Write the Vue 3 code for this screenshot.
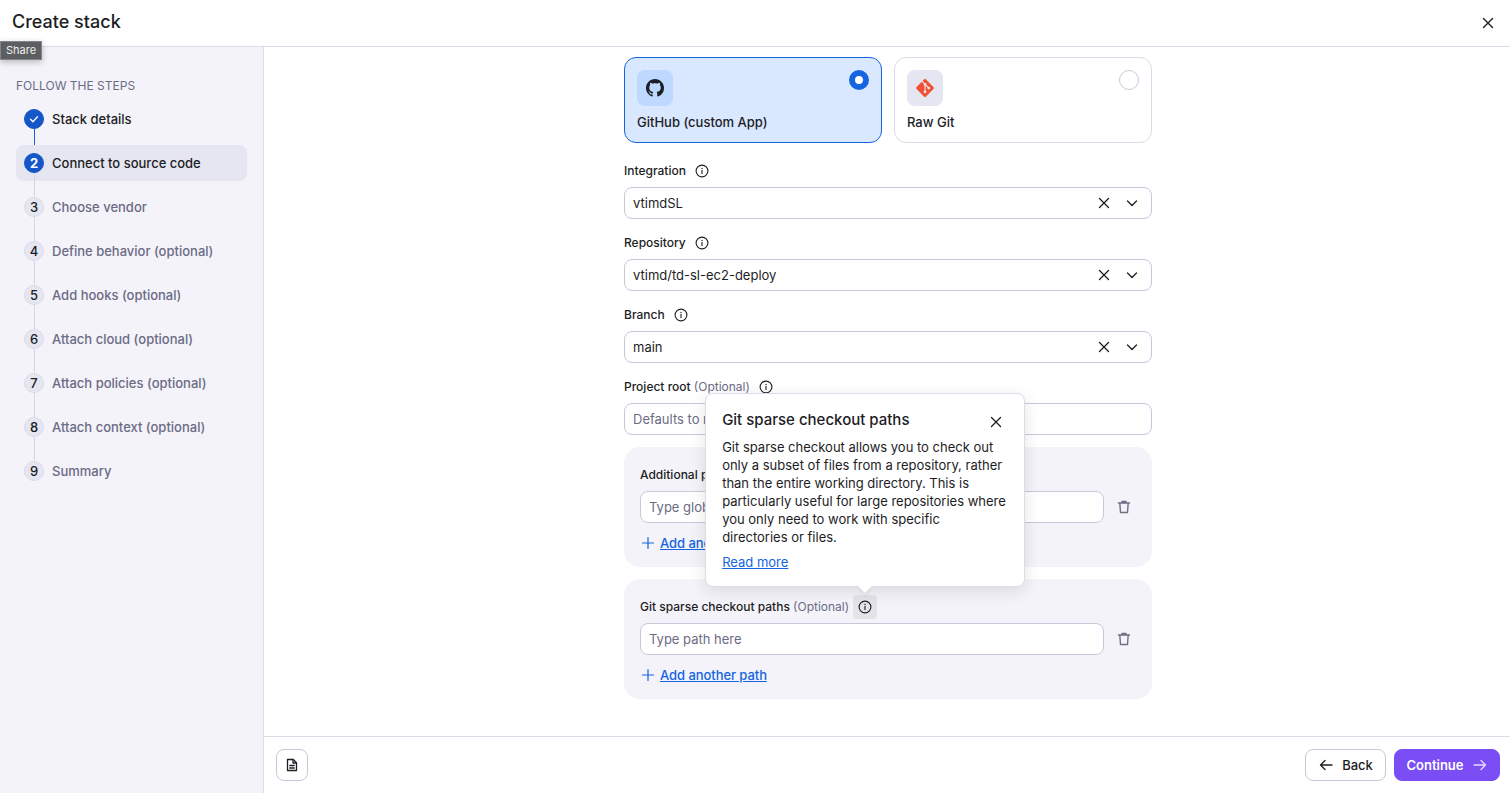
<script setup>
const steps = [
	{ n: 1, label: 'Stack details', state: 'done' },
	{ n: 2, label: 'Connect to source code', state: 'active' },
	{ n: 3, label: 'Choose vendor', state: 'todo' },
	{ n: 4, label: 'Define behavior (optional)', state: 'todo' },
	{ n: 5, label: 'Add hooks (optional)', state: 'todo' },
	{ n: 6, label: 'Attach cloud (optional)', state: 'todo' },
	{ n: 7, label: 'Attach policies (optional)', state: 'todo' },
	{ n: 8, label: 'Attach context (optional)', state: 'todo' },
	{ n: 9, label: 'Summary', state: 'todo' }
]

const selects = [
	{ label: 'Integration', value: 'vtimdSL' },
	{ label: 'Repository', value: 'vtimd/td-sl-ec2-deploy' },
	{ label: 'Branch', value: 'main' }
]
</script>

<template>
	<div class="page">
		<header class="topbar">
			<h1 class="title">Create stack</h1>
			<svg class="close" width="16" height="16" viewBox="0 0 16 16" fill="none" stroke="#1d1d25" stroke-width="1.4" stroke-linecap="round">
				<path d="M3.5 3.5l9 9M12.5 3.5l-9 9" />
			</svg>
		</header>
		<div class="share-tip">Share</div>

		<div class="body">
			<aside class="sidebar">
				<div class="steps-title">FOLLOW THE STEPS</div>
				<ul class="steps">
					<li
						v-for="step in steps"
						:key="step.n"
						class="step"
						:class="step.state"
					>
						<span class="dot">
							<svg v-if="step.state === 'done'" width="12" height="12" viewBox="0 0 12 12" fill="none" stroke="#fff" stroke-width="1.3" stroke-linecap="round" stroke-linejoin="round">
								<path d="M2.5 6.3l2.4 2.4 4.6-5" />
							</svg>
							<template v-else>{{ step.n }}</template>
						</span>
						<span class="step-label">{{ step.label }}</span>
					</li>
				</ul>
			</aside>

			<div class="main">
				<div class="content">
					<div class="form">
						<div class="cards">
							<div class="card selected">
								<span class="card-icon">
									<svg width="18" height="18" viewBox="0 0 16 16" fill="#1d1d25">
										<path d="M8 0C3.58 0 0 3.58 0 8c0 3.54 2.29 6.53 5.47 7.59.4.07.55-.17.55-.38 0-.19-.01-.82-.01-1.49-2.01.37-2.53-.49-2.69-.94-.09-.23-.48-.94-.82-1.13-.28-.15-.68-.52-.01-.53.63-.01 1.08.58 1.23.82.72 1.21 1.87.87 2.33.66.07-.52.28-.87.51-1.07-1.78-.2-3.64-.89-3.64-3.95 0-.87.31-1.59.82-2.15-.08-.2-.36-1.02.08-2.12 0 0 .67-.21 2.2.82.64-.18 1.32-.27 2-.27.68 0 1.36.09 2 .27 1.53-1.04 2.2-.82 2.2-.82.44 1.1.16 1.92.08 2.12.51.56.82 1.27.82 2.15 0 3.07-1.87 3.75-3.65 3.95.29.25.54.73.54 1.48 0 1.07-.01 1.93-.01 2.2 0 .21.15.46.55.38A8.013 8.013 0 0016 8c0-4.42-3.58-8-8-8z" />
									</svg>
								</span>
								<span class="card-label">GitHub (custom App)</span>
								<span class="radio on"></span>
							</div>
							<div class="card">
								<span class="card-icon">
									<svg width="18" height="18" viewBox="0 0 24 24" fill="#f05133">
										<path d="M23.546 10.93L13.067.452c-.604-.603-1.582-.603-2.188 0L8.708 2.627l2.76 2.76c.645-.215 1.379-.07 1.889.441.516.515.658 1.258.438 1.9l2.658 2.66c.645-.223 1.387-.078 1.9.435.721.72.721 1.884 0 2.604-.719.719-1.881.719-2.6 0-.539-.541-.674-1.337-.404-1.996L12.86 8.955v6.525c.176.086.342.203.488.348.713.721.713 1.883 0 2.6-.719.721-1.889.721-2.609 0-.719-.719-.719-1.879 0-2.598.182-.18.387-.316.605-.406V8.835c-.217-.091-.424-.222-.6-.401-.545-.545-.676-1.342-.396-2.009L7.636 3.7.45 10.881c-.6.605-.6 1.584 0 2.189l10.48 10.477c.604.604 1.582.604 2.186 0l10.43-10.43c.605-.603.605-1.582 0-2.187" />
									</svg>
								</span>
								<span class="card-label">Raw Git</span>
								<span class="radio"></span>
							</div>
						</div>

						<div v-for="item in selects" :key="item.label" class="field">
							<div class="label">
								<span>{{ item.label }}</span>
								<svg class="info" width="14" height="14" viewBox="0 0 14 14" fill="none" stroke="#1d1d25" stroke-width="1.1">
									<circle cx="7" cy="7" r="5.9" />
									<path d="M7 6.4v3.2" stroke-linecap="round" />
									<circle cx="7" cy="4.4" r=".7" fill="#1d1d25" stroke="none" />
								</svg>
							</div>
							<div class="select">
								<span class="select-value">{{ item.value }}</span>
								<svg width="16" height="16" viewBox="0 0 16 16" fill="none" stroke="#1d1d25" stroke-width="1.3" stroke-linecap="round">
									<path d="M3.5 3.5l9 9M12.5 3.5l-9 9" />
								</svg>
								<svg width="16" height="16" viewBox="0 0 16 16" fill="none" stroke="#1d1d25" stroke-width="1.3" stroke-linecap="round" stroke-linejoin="round">
									<path d="M3.5 6l4.5 4.5L12.5 6" />
								</svg>
							</div>
						</div>

						<div class="field root">
							<div class="label">
								<span>Project root <span class="optional">(Optional)</span></span>
								<svg class="info" width="14" height="14" viewBox="0 0 14 14" fill="none" stroke="#1d1d25" stroke-width="1.1">
									<circle cx="7" cy="7" r="5.9" />
									<path d="M7 6.4v3.2" stroke-linecap="round" />
									<circle cx="7" cy="4.4" r=".7" fill="#1d1d25" stroke="none" />
								</svg>
							</div>
							<div class="input">Defaults to repository root</div>
						</div>

						<div class="panel">
							<div class="label panel-label">
								<span>Additional project globs <span class="optional">(Optional)</span></span>
							</div>
							<div class="input-row">
								<div class="input grow">Type glob here</div>
								<svg class="trash" width="16" height="16" viewBox="0 0 16 16" fill="none" stroke="#6f6f85" stroke-width="1.4" stroke-linecap="round" stroke-linejoin="round">
									<path d="M2.5 4h11M6 4V2.5h4V4M3.8 4l.7 9.5h7l.7-9.5" />
								</svg>
							</div>
							<div class="add-row">
								<svg width="14" height="14" viewBox="0 0 14 14" fill="none" stroke="#1565e0" stroke-width="1.2" stroke-linecap="round">
									<path d="M7 1.5v11M1.5 7h11" />
								</svg>
								<a class="link">Add another glob</a>
							</div>
						</div>

						<div class="panel">
							<div class="label panel-label">
								<span>Git sparse checkout paths <span class="optional">(Optional)</span></span>
								<span class="info-btn">
									<svg width="14" height="14" viewBox="0 0 14 14" fill="none" stroke="#1d1d25" stroke-width="1.1">
										<circle cx="7" cy="7" r="5.9" />
										<path d="M7 6.4v3.2" stroke-linecap="round" />
										<circle cx="7" cy="4.4" r=".7" fill="#1d1d25" stroke="none" />
									</svg>
									<div class="popover">
										<div class="pop-head">
											<span class="pop-title">Git sparse checkout paths</span>
											<svg class="pop-close" width="16" height="16" viewBox="0 0 16 16" fill="none" stroke="#1d1d25" stroke-width="1.3" stroke-linecap="round">
												<path d="M3.5 3.5l9 9M12.5 3.5l-9 9" />
											</svg>
										</div>
										<p class="pop-text">Git sparse checkout allows you to check out only a subset of files from a repository, rather than the entire working directory. This is particularly useful for large repositories where you only need to work with specific directories or files.</p>
										<a class="link pop-link">Read more</a>
										<span class="pop-arrow"></span>
									</div>
								</span>
							</div>
							<div class="input-row">
								<div class="input grow">Type path here</div>
								<svg class="trash" width="16" height="16" viewBox="0 0 16 16" fill="none" stroke="#6f6f85" stroke-width="1.4" stroke-linecap="round" stroke-linejoin="round">
									<path d="M2.5 4h11M6 4V2.5h4V4M3.8 4l.7 9.5h7l.7-9.5" />
								</svg>
							</div>
							<div class="add-row">
								<svg width="14" height="14" viewBox="0 0 14 14" fill="none" stroke="#1565e0" stroke-width="1.2" stroke-linecap="round">
									<path d="M7 1.5v11M1.5 7h11" />
								</svg>
								<a class="link">Add another path</a>
							</div>
						</div>
					</div>
				</div>

				<footer class="footer">
					<button class="btn icon-btn">
						<svg width="16" height="16" viewBox="0 0 16 16" fill="none" stroke="#1d1d25" stroke-width="1.3" stroke-linejoin="round" stroke-linecap="round">
							<path d="M3.5 2.5h5.8l3.2 3.2v7.8h-9z" />
							<path d="M9 2.5V6h3.5M5.8 8.5h4.4M5.8 11h4.4" />
						</svg>
					</button>
					<div class="footer-right">
						<button class="btn back">
							<svg width="16" height="16" viewBox="0 0 16 16" fill="none" stroke="#1d1d25" stroke-width="1.3" stroke-linecap="round" stroke-linejoin="round">
								<path d="M14 8H2.5M7 3.5L2.5 8 7 12.5" />
							</svg>
							Back
						</button>
						<button class="btn continue">
							Continue
							<svg width="16" height="16" viewBox="0 0 16 16" fill="none" stroke="#e6dbff" stroke-width="1.3" stroke-linecap="round" stroke-linejoin="round">
								<path d="M2 8h11.5M9 3.5L13.5 8 9 12.5" />
							</svg>
						</button>
					</div>
				</footer>
			</div>
		</div>
	</div>
</template>

<style>
html, body {
	margin: 0;
	background: #fff;
}
</style>

<style scoped>
.page {
	position: relative;
	display: flex;
	flex-direction: column;
	width: 1510px;
	height: 793px;
	overflow: hidden;
	font-family: Inter, "Noto Sans", sans-serif;
	font-size: 13px;
	color: #1d1d25;
}

.topbar {
	display: flex;
	align-items: center;
	justify-content: space-between;
	height: 47px;
	box-sizing: border-box;
	padding: 0 14px 0 12px;
	border-bottom: 1px solid #dcdce8;
	flex-shrink: 0;
}

.title {
	margin: 0 0 2px;
	font-size: 18px;
	font-weight: 500;
	line-height: 24px;
}

.share-tip {
	position: absolute;
	left: 0;
	top: 41px;
	width: 42px;
	height: 19px;
	box-sizing: border-box;
	border: 1px solid #858585;
	background: #5b5f61;
	color: #f0f0f0;
	font-size: 11px;
	line-height: 17px;
	text-align: center;
	box-shadow: 0 2px 6px rgba(0, 0, 0, 0.25);
}

.body {
	display: flex;
	flex: 1;
	min-height: 0;
}

.sidebar {
	width: 264px;
	flex-shrink: 0;
	box-sizing: border-box;
	padding: 31px 16px 0;
	background: #f3f3f9;
	border-right: 1px solid #dcdce8;
}

.steps-title {
	font-size: 12px;
	line-height: 16px;
	color: #6b6b85;
	margin-bottom: 7px;
}

.steps {
	list-style: none;
	margin: 0;
	padding: 0;
	display: flex;
	flex-direction: column;
	gap: 8px;
}

.step {
	position: relative;
	display: flex;
	align-items: center;
	gap: 8px;
	width: 231px;
	height: 36px;
	padding-left: 8px;
	box-sizing: border-box;
	border-radius: 8px;
	color: #6b6b85;
	font-weight: 500;
}

.step.active {
	background: #e5e6f1;
}

.step.done,
.step.active {
	color: #1d1d25;
}

.step::after {
	content: '';
	position: absolute;
	left: 17.5px;
	top: 28px;
	width: 1px;
	height: 24px;
	background: #d5d5e6;
}

.step.done::after {
	background: #1565e0;
}

.step:last-child::after {
	display: none;
}

.dot {
	position: relative;
	z-index: 1;
	display: flex;
	align-items: center;
	justify-content: center;
	width: 20px;
	height: 20px;
	box-sizing: border-box;
	border-radius: 50%;
	background: #e5e6f1;
	border: 1px solid #dcdce8;
	color: #1d1d25;
	font-size: 13px;
	font-weight: 500;
}

.step.done .dot,
.step.active .dot {
	background: #1557c9;
	border-color: #1557c9;
	color: #fff;
	font-weight: 700;
}

.main {
	flex: 1;
	min-width: 0;
	display: flex;
	flex-direction: column;
}

.content {
	flex: 1;
	min-height: 0;
	display: flex;
	justify-content: center;
	padding-top: 10px;
}

.form {
	width: 528px;
	margin-left: 2px;
}

.cards {
	display: grid;
	grid-template-columns: 258px 258px;
	gap: 12px;
	margin-bottom: 20px;
}

.card {
	position: relative;
	display: flex;
	flex-direction: column;
	align-items: flex-start;
	height: 86px;
	box-sizing: border-box;
	padding: 12px 12px 0;
	border: 1px solid #dcdce8;
	border-radius: 12px;
}

.card.selected {
	background: #d9e8ff;
	border-color: #1565e0;
}

.card-icon {
	display: flex;
	align-items: center;
	justify-content: center;
	width: 36px;
	height: 36px;
	flex-shrink: 0;
	border-radius: 8px;
	background: #e5e6f1;
}

.selected .card-icon {
	background: #bdd9ff;
}

.card-label {
	margin-top: 6px;
	line-height: 20px;
	font-weight: 500;
}

.radio {
	position: absolute;
	top: 12px;
	right: 12px;
	width: 20px;
	height: 20px;
	box-sizing: border-box;
	border-radius: 50%;
	border: 1px solid #c8c8da;
	background: #fff;
}

.radio.on {
	border: 6px solid #1565e0;
}

.field {
	margin-bottom: 16px;
}

.field.root {
	margin-bottom: 12px;
}

.label {
	display: flex;
	align-items: center;
	gap: 4px;
	height: 16px;
	margin-bottom: 8px;
	font-size: 12px;
	font-weight: 500;
	line-height: 16px;
}

.optional {
	color: #6b6b85;
	font-weight: 400;
}

.info {
	margin-left: 5px;
}

.select,
.input {
	display: flex;
	align-items: center;
	height: 32px;
	box-sizing: border-box;
	padding: 0 8px;
	border: 1px solid #c8c8da;
	border-radius: 8px;
	background: #fff;
}

.select {
	gap: 12px;
	padding-right: 11px;
}

.select-value {
	flex: 1;
}

.input {
	color: #6b6b85;
}

.panel {
	padding: 20px 20px 16px 16px;
	margin-bottom: 12px;
	height: 120px;
	box-sizing: border-box;
	background: #f3f3f9;
	border-radius: 16px;
}

.panel-label {
	margin-bottom: 8px;
}

.input-row {
	display: flex;
	align-items: center;
	gap: 12px;
}

.grow {
	flex: 1;
}

.add-row {
	display: flex;
	align-items: center;
	gap: 5px;
	height: 20px;
	margin-top: 10px;
	padding-left: 1px;
}

.link {
	color: #1565e0;
	text-decoration: underline;
	font-weight: 500;
	letter-spacing: -0.06px;
}

.info-btn {
	position: relative;
	display: flex;
	align-items: center;
	justify-content: center;
	width: 24px;
	height: 24px;
	border-radius: 4px;
	background: #e3e3e8;
	flex-shrink: 0;
}

.popover {
	position: absolute;
	left: -148px;
	bottom: 32px;
	z-index: 5;
	width: 320px;
	box-sizing: border-box;
	padding: 16px 16px 15px;
	background: #fff;
	border: 1px solid #dcdce8;
	border-radius: 8px;
	box-shadow: 0 4px 16px rgba(29, 29, 37, 0.12);
}

.pop-head {
	display: flex;
	align-items: center;
	justify-content: space-between;
	height: 20px;
	padding-right: 4px;
}

.pop-close {
	margin-top: 4px;
}

.pop-title {
	font-size: 15px;
	font-weight: 500;
}

.pop-text {
	margin: 8px 0 0;
	padding-right: 1px;
	font-size: 13px;
	font-weight: 400;
	line-height: 18px;
}

.pop-link {
	display: inline-block;
	margin-top: 7px;
	font-size: 13px;
	line-height: 18px;
	font-weight: 400;
	letter-spacing: 0;
}

.pop-arrow {
	position: absolute;
	left: 154px;
	bottom: -5px;
	width: 10px;
	height: 10px;
	background: #fff;
	transform: rotate(45deg);
	border-radius: 1px;
	box-shadow: 2px 2px 4px rgba(29, 29, 37, 0.06);
}

.footer {
	display: flex;
	align-items: center;
	justify-content: space-between;
	height: 57px;
	flex-shrink: 0;
	box-sizing: border-box;
	padding: 0 10px 0 12px;
	border-top: 1px solid #dcdce8;
}

.footer-right {
	display: flex;
	gap: 8px;
}

.btn {
	display: flex;
	align-items: center;
	justify-content: center;
	gap: 8px;
	height: 32px;
	box-sizing: border-box;
	border: 1px solid #c8c8da;
	border-radius: 8px;
	background: #fff;
	color: #1d1d25;
	font-family: inherit;
	font-size: 13px;
	font-weight: 500;
	padding: 0;
}

.icon-btn {
	width: 32px;
}

.back {
	width: 81px;
}

.continue {
	width: 106px;
	background: #7a4df5;
	border-color: #7a4df5;
	color: #fff;
	font-weight: 600;
}
</style>
